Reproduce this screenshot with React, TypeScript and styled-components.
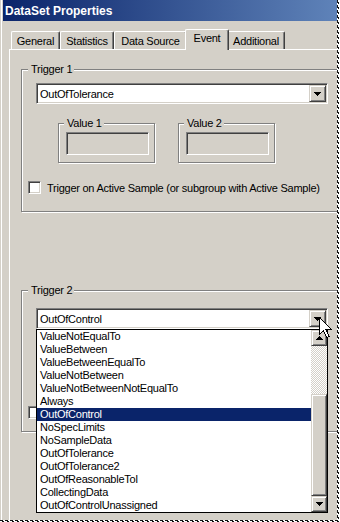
import React from "react";
import styled, { createGlobalStyle } from "styled-components";

const GlobalStyle = createGlobalStyle`
  html, body {
    margin: 0;
    padding: 0;
    background: #fff;
  }
  body {
    font-family: "Liberation Sans", Arial, sans-serif;
    font-size: 11px;
  }
`;

const Shot = styled.div`
  display: grid;
  grid-template-columns: 337px 3px;
  grid-template-rows: 520px 2px;
  width: 340px;
  height: 522px;
`;

const EdgeRight = styled.div`
  background-color: #fff;
  background-image: repeating-linear-gradient(
      to bottom,
      #111 0 3px,
      transparent 3px 5px
    ),
    repeating-linear-gradient(to bottom, transparent 0 2px, #111 2px 4px, transparent 4px 5px);
  background-size: 1px 100%, 1px 100%;
  background-position: 0 0, 1px 0;
  background-repeat: no-repeat;
`;

const EdgeBottom = styled.div`
  grid-column: 1 / 3;
  background-color: #fff;
  background-image: repeating-linear-gradient(
      to right,
      #111 0 3px,
      transparent 3px 5px
    ),
    repeating-linear-gradient(to right, transparent 0 2px, #111 2px 4px, transparent 4px 5px);
  background-size: 100% 1px, 100% 1px;
  background-position: 0 0, 0 1px;
  background-repeat: no-repeat;
`;

const Window = styled.div`
  position: relative;
  overflow: hidden;
  box-sizing: border-box;
  padding-left: 3px;
  background: #d4d0c8;
  box-shadow: inset 1px 0 #d4d0c8, inset 2px 0 #fff;
  color: #000;
  font-family: "Liberation Sans", Arial, sans-serif;
  font-size: 11px;
  letter-spacing: -0.25px;
`;

const TitleBar = styled.div`
  height: 21px;
  display: flex;
  align-items: center;
  padding-left: 2px;
  background: linear-gradient(90deg, #0a246a, #5f83b9);
  color: #fff;
  font-size: 12px;
  font-weight: bold;
  letter-spacing: 0;
  white-space: nowrap;
`;

const Body = styled.div`
  padding: 8px 0 0 6px;
`;

const TabRow = styled.div`
  position: relative;
  z-index: 1;
  display: flex;
  align-items: flex-end;
  height: 20px;
  padding-left: 2px;
`;

const Tab = styled.div<{ $w: number; $active?: boolean }>`
  position: relative;
  z-index: ${(p) => (p.$active ? 2 : 1)};
  box-sizing: border-box;
  width: ${(p) => (p.$active ? p.$w + 4 : p.$w)}px;
  height: ${(p) => (p.$active ? 21 : 18)}px;
  margin: 0 ${(p) => (p.$active ? -2 : 0)}px ${(p) => (p.$active ? -1 : 0)}px;
  padding-bottom: ${(p) => (p.$active ? 4 : 0)}px;
  display: flex;
  align-items: center;
  justify-content: center;
  white-space: nowrap;
  background: #d4d0c8;
  border: 1px solid #fff;
  border-right-color: #404040;
  border-bottom: none;
  border-radius: 2px 2px 0 0;
  box-shadow: inset -1px 0 #808080;
`;

const Panel = styled.div`
  box-sizing: border-box;
  width: 360px;
  height: 480px;
  padding: 13px 0 0 11px;
  border-top: 1px solid #fff;
  border-left: 1px solid #fff;
`;

const GroupBox = styled.fieldset<{ $w: number; $pt: number; $pb: number; $pl: number; $mt?: number }>`
  box-sizing: border-box;
  min-width: 0;
  width: ${(p) => p.$w}px;
  margin: ${(p) => p.$mt ?? 0}px 0 0;
  padding: ${(p) => p.$pt}px 0 ${(p) => p.$pb}px ${(p) => p.$pl}px;
  border: 1px solid #808080;
  box-shadow: inset 1px 1px #fff, 1px 1px #fff;
`;

const Legend = styled.legend<{ $ml?: number }>`
  height: 13px;
  line-height: 13px;
  margin-left: ${(p) => p.$ml ?? 0}px;
  padding: 0 2px 0 3px;
  background: #d4d0c8;
  white-space: nowrap;
`;

const ComboWrap = styled.div`
  position: relative;
  width: 292px;
  margin-left: 8px;
`;

const Combo = styled.div`
  box-sizing: border-box;
  display: flex;
  align-items: center;
  height: 21px;
  padding: 1px;
  background: #fff;
  border: 1px solid;
  border-color: #808080 #fff #fff #808080;
  box-shadow: inset 1px 1px #404040, inset -1px -1px #d4d0c8;
`;

const ComboText = styled.div`
  flex: 1;
  padding-left: 2px;
  white-space: nowrap;
`;

const ArrowButton = styled.div<{ $h?: number }>`
  box-sizing: border-box;
  flex: none;
  display: flex;
  align-items: center;
  justify-content: center;
  width: ${(p) => (p.$h ? 16 : 17)}px;
  height: ${(p) => p.$h ?? 17}px;
  background: #d4d0c8;
  border: 1px solid;
  border-color: #d4d0c8 #404040 #404040 #d4d0c8;
  box-shadow: inset 1px 1px #fff, inset -1px -1px #808080;
`;

const DropList = styled.div`
  position: absolute;
  top: 21px;
  left: 0;
  z-index: 5;
  box-sizing: border-box;
  display: flex;
  width: 292px;
  background: #fff;
  border: 1px solid #000;
`;

const Options = styled.div`
  flex: 1;
`;

const Option = styled.div<{ $selected?: boolean }>`
  height: 13px;
  line-height: 13px;
  padding-left: 3px;
  white-space: nowrap;
  background: ${(p) => (p.$selected ? "#0a246a" : "transparent")};
  color: ${(p) => (p.$selected ? "#fff" : "#000")};
`;

const ScrollBar = styled.div`
  display: flex;
  flex-direction: column;
  width: 16px;
`;

const Track = styled.div`
  flex: 1;
  background: repeating-conic-gradient(#fff 0 25%, #d4d0c8 0 50%) 0 0 / 2px 2px;
`;

const Thumb = styled.div`
  box-sizing: border-box;
  height: 102px;
  background: #d4d0c8;
  border: 1px solid;
  border-color: #d4d0c8 #404040 #404040 #d4d0c8;
  box-shadow: inset 1px 1px #fff, inset -1px -1px #808080;
`;

const Cursor = styled.svg`
  position: absolute;
  left: 283px;
  top: 9px;
  z-index: 6;
`;

const ValueRow = styled.div`
  display: flex;
  gap: 23px;
  height: 46px;
  margin: 13px 0 0 30px;
`;

const EditBox = styled.div`
  box-sizing: border-box;
  width: 83px;
  height: 23px;
  background: #d4d0c8;
  border: 1px solid;
  border-color: #808080 #fff #fff #808080;
  box-shadow: inset 1px 1px #404040, inset -1px -1px #d4d0c8;
`;

const CheckRow = styled.label`
  display: flex;
  align-items: center;
  gap: 6px;
  height: 13px;
  margin-top: 18px;
  white-space: nowrap;
`;

const CheckBox = styled.span`
  box-sizing: border-box;
  flex: none;
  width: 13px;
  height: 13px;
  background: #fff;
  border: 1px solid;
  border-color: #808080 #fff #fff #808080;
  box-shadow: inset 1px 1px #404040, inset -1px -1px #d4d0c8;
`;

const Arrow = ({ up }: { up?: boolean }) => (
  <svg width="7" height="4" viewBox="0 0 7 4" shapeRendering="crispEdges">
    <polygon points={up ? "3.5,0 7,4 0,4" : "0,0 7,0 3.5,4"} fill="#000" />
  </svg>
);

const tabs = [
  { label: "General", w: 49 },
  { label: "Statistics", w: 54 },
  { label: "Data Source", w: 73 },
  { label: "Event", w: 40, active: true },
  { label: "Additional", w: 58 },
];

const options = [
  "ValueNotEqualTo",
  "ValueBetween",
  "ValueBetweenEqualTo",
  "ValueNotBetween",
  "ValueNotBetweenNotEqualTo",
  "Always",
  "OutOfControl",
  "NoSpecLimits",
  "NoSampleData",
  "OutOfTolerance",
  "OutOfTolerance2",
  "OutOfReasonableTol",
  "CollectingData",
  "OutOfControlUnassigned",
];

function Trigger({ title, value, open, mt, pt, pb }: { title: string; value: string; open?: boolean; mt?: number; pt: number; pb: number }) {
  // when the list is open it covers the value boxes and the checkbox label
  return (
    <GroupBox $w={330} $pt={pt} $pb={pb} $pl={6} $mt={mt}>
      <Legend>{title}</Legend>
      <ComboWrap>
        <Combo>
          <ComboText>{value}</ComboText>
          <ArrowButton>
            <Arrow />
          </ArrowButton>
        </Combo>
        {open && (
          <>
            <DropList>
              <Options>
                {options.map((o) => (
                  <Option key={o} $selected={o === value}>
                    {o}
                  </Option>
                ))}
              </Options>
              <ScrollBar>
                <ArrowButton $h={16}>
                  <Arrow up />
                </ArrowButton>
                <Track />
                <Thumb />
                <ArrowButton $h={16}>
                  <Arrow />
                </ArrowButton>
              </ScrollBar>
            </DropList>
            <Cursor width="14" height="22" viewBox="0 0 14 22" shapeRendering="crispEdges">
              <path d="M0.5 0.5 L0.5 17.5 L4.5 13.5 L7.5 20.5 L10 19.5 L7 12.5 L12.5 12.5 Z" fill="#fff" stroke="#000" strokeWidth="1" />
            </Cursor>
          </>
        )}
      </ComboWrap>
      <ValueRow>
        {!open &&
          ["Value 1", "Value 2"].map((v) => (
            <GroupBox key={v} $w={97} $pt={2} $pb={7} $pl={7}>
              <Legend $ml={-2}>{v}</Legend>
              <EditBox />
            </GroupBox>
          ))}
      </ValueRow>
      <CheckRow>
        <CheckBox />
        {!open && "Trigger on Active Sample (or subgroup with Active Sample)"}
      </CheckRow>
    </GroupBox>
  );
}

export default function App() {
  return (
    <>
      <GlobalStyle />
      <Shot>
        <Window>
          <TitleBar>DataSet Properties</TitleBar>
          <Body>
            <TabRow>
              {tabs.map((t) => (
                <Tab key={t.label} $w={t.w} $active={t.active}>
                  {t.label}
                </Tab>
              ))}
            </TabRow>
            <Panel>
              <Trigger title="Trigger 1" value="OutOfTolerance" pt={7} pb={17} />
              <Trigger title="Trigger 2" value="OutOfControl" open mt={72} pt={11} pb={12} />
            </Panel>
          </Body>
        </Window>
        <EdgeRight />
        <EdgeBottom />
      </Shot>
    </>
  );
}
